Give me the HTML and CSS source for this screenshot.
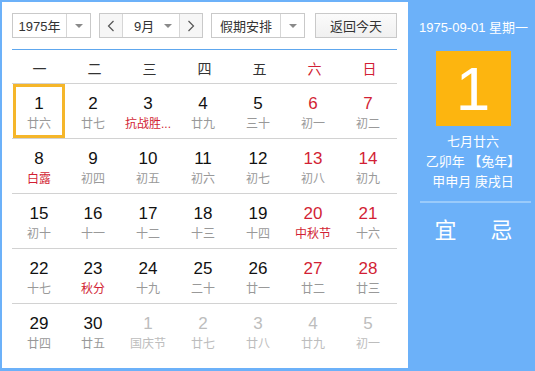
FILE: index.html
```html
<!DOCTYPE html>
<html lang="zh">
<head>
<meta charset="utf-8">
<link rel="stylesheet" href="styles.css">
</head>
<body>
<div class="app">
  <div class="main">
    <div class="controls">
      <div class="select year">
        <span class="sel-text">1975年</span>
        <span class="sel-arrow"><i class="tri"></i></span>
      </div>
      <div class="month-group">
        <span class="nav"><svg width="8" height="12" viewBox="0 0 8 12"><polyline points="6.5,1 1.5,6 6.5,11" fill="none" stroke="#555" stroke-width="1.2"/></svg></span>
        <span class="month"><span class="m-text">9月</span><i class="tri"></i></span>
        <span class="nav"><svg width="8" height="12" viewBox="0 0 8 12"><polyline points="1.5,1 6.5,6 1.5,11" fill="none" stroke="#555" stroke-width="1.2"/></svg></span>
      </div>
      <div class="select holiday">
        <span class="sel-text">假期安排</span>
        <span class="sel-arrow"><i class="tri"></i></span>
      </div>
      <div class="today-btn">返回今天</div>
    </div>
    <div class="rule"></div>
    <div class="weekhead">
      <span>一</span><span>二</span><span>三</span><span>四</span><span>五</span><span class="red">六</span><span class="red">日</span>
    </div>
    <div class="grid">
      <div class="row">
        <div class="day sel"><b>1</b><small>廿六</small></div>
        <div class="day"><b>2</b><small>廿七</small></div>
        <div class="day"><b>3</b><small class="red">抗战胜...</small></div>
        <div class="day"><b>4</b><small>廿九</small></div>
        <div class="day"><b>5</b><small>三十</small></div>
        <div class="day"><b class="red">6</b><small>初一</small></div>
        <div class="day"><b class="red">7</b><small>初二</small></div>
      </div>
      <div class="row">
        <div class="day"><b>8</b><small class="red">白露</small></div>
        <div class="day"><b>9</b><small>初四</small></div>
        <div class="day"><b>10</b><small>初五</small></div>
        <div class="day"><b>11</b><small>初六</small></div>
        <div class="day"><b>12</b><small>初七</small></div>
        <div class="day"><b class="red">13</b><small>初八</small></div>
        <div class="day"><b class="red">14</b><small>初九</small></div>
      </div>
      <div class="row">
        <div class="day"><b>15</b><small>初十</small></div>
        <div class="day"><b>16</b><small>十一</small></div>
        <div class="day"><b>17</b><small>十二</small></div>
        <div class="day"><b>18</b><small>十三</small></div>
        <div class="day"><b>19</b><small>十四</small></div>
        <div class="day"><b class="red">20</b><small class="red">中秋节</small></div>
        <div class="day"><b class="red">21</b><small>十六</small></div>
      </div>
      <div class="row">
        <div class="day"><b>22</b><small>十七</small></div>
        <div class="day"><b>23</b><small class="red">秋分</small></div>
        <div class="day"><b>24</b><small>十九</small></div>
        <div class="day"><b>25</b><small>二十</small></div>
        <div class="day"><b>26</b><small>廿一</small></div>
        <div class="day"><b class="red">27</b><small>廿二</small></div>
        <div class="day"><b class="red">28</b><small>廿三</small></div>
      </div>
      <div class="row last">
        <div class="day"><b>29</b><small>廿四</small></div>
        <div class="day"><b>30</b><small>廿五</small></div>
        <div class="day other"><b>1</b><small>国庆节</small></div>
        <div class="day other"><b>2</b><small>廿七</small></div>
        <div class="day other"><b>3</b><small>廿八</small></div>
        <div class="day other"><b>4</b><small>廿九</small></div>
        <div class="day other"><b>5</b><small>初一</small></div>
      </div>
    </div>
  </div>
  <div class="side">
    <div class="side-date">1975-09-01 星期一</div>
    <div class="big-day">1</div>
    <div class="lunar">
      <div>七月廿六</div>
      <div>乙卯年 【兔年】</div>
      <div>甲申月 庚戌日</div>
    </div>
    <div class="side-rule"></div>
    <div class="yiji"><span>宜</span><span>忌</span></div>
  </div>
</div>
</body>
</html>
```

FILE: styles.css
```css
* { box-sizing: border-box; }
body {
  margin: 0;
  font-family: "Liberation Sans", "Noto Sans CJK SC", Arial, sans-serif;
}
.app {
  width: 535px;
  height: 371px;
  background: #6cb1f9;
  padding: 2px 0 3px 2px;
  display: flex;
}
.main {
  width: 406px;
  background: #fff;
  padding: 11px 0 0 10px;
}
.controls {
  display: flex;
  height: 25px;
  width: 386px;
}
.select, .month-group, .today-btn {
  border: 1px solid #c9c9c9;
  height: 25px;
  display: flex;
  align-items: stretch;
  font-size: 13px;
  color: #333;
}
.select { background: #fff; }
.sel-text {
  flex: 1;
  display: flex;
  align-items: center;
  justify-content: center;
}
.sel-arrow {
  width: 24px;
  border-left: 1px solid #d6d6d6;
  display: flex;
  align-items: center;
  justify-content: center;
}
.tri {
  width: 0;
  height: 0;
  border-left: 4px solid transparent;
  border-right: 4px solid transparent;
  border-top: 4px solid #8a8a8a;
}
.year { width: 79px; }
.month-group { width: 104px; margin-left: 8px; }
.holiday { width: 94px; margin-left: 8px; }
.today-btn {
  width: 82px;
  margin-left: 10px;
  justify-content: center;
  align-items: center;
  background: linear-gradient(#fbfbfb, #f0f0f0);
}
.nav {
  width: 22px;
  display: flex;
  align-items: center;
  justify-content: center;
  background: #f6f6f6;
}
.month {
  flex: 1;
  border-left: 1px solid #d6d6d6;
  border-right: 1px solid #d6d6d6;
  display: flex;
  align-items: center;
  padding: 0 7px 0 11px;
  background: #fff;
}
.m-text { flex: 1; }
.rule {
  margin-top: 11px;
  width: 385px;
  height: 1px;
  background: #5ea7ee;
}
.weekhead {
  display: flex;
  width: 385px;
  height: 34px;
  border-bottom: 1px solid #d2d2d2;
  font-size: 14px;
  color: #333;
  padding-top: 2px;
}
.weekhead span {
  width: 55px;
  display: flex;
  align-items: center;
  justify-content: center;
}
.red { color: #d21f35 !important; }
.grid { width: 385px; }
.row {
  display: flex;
  height: 55px;
  border-bottom: 1px solid #d2d2d2;
}
.row.last { border-bottom: none; }
.day {
  width: 52px;
  height: 54px;
  margin-right: 3px;
  margin-left: 0;
  border: 3px solid transparent;
  display: flex;
  flex-direction: column;
  align-items: center;
  padding-top: 7px;
}
.row .day:first-child { margin-left: 1px; margin-right: 2px; }
.day.sel { border-color: #f5b62a; }
.day b {
  font-weight: normal;
  font-size: 17px;
  line-height: 20px;
  color: #111;
}
.day small {
  font-size: 12px;
  line-height: 16px;
  margin-top: 2px;
  color: #999;
}
.day.other b, .day.other small { color: #bdbdbd; }
.side {
  flex: 1;
  display: flex;
  flex-direction: column;
  align-items: center;
  color: #fff;
  padding-top: 17px;
}
.side-date {
  font-size: 13px;
  line-height: 18px;
  padding-left: 4px;
}
.big-day {
  margin-top: 14px;
  width: 75px;
  height: 75px;
  background: #fdb50f;
  font-size: 62px;
  display: flex;
  align-items: center;
  justify-content: center;
  margin-left: 3px;
}
.lunar {
  margin-top: 6px;
  font-size: 13px;
  line-height: 20px;
  text-align: center;
  padding-left: 3px;
}
.side-rule {
  margin-top: 9px;
  width: 111px;
  height: 2px;
  background: #9acbfb;
  margin-left: 7px;
}
.yiji {
  margin-top: 15px;
  display: flex;
  gap: 34px;
  font-size: 22px;
  line-height: 26px;
  padding-left: 4px;
}
```
